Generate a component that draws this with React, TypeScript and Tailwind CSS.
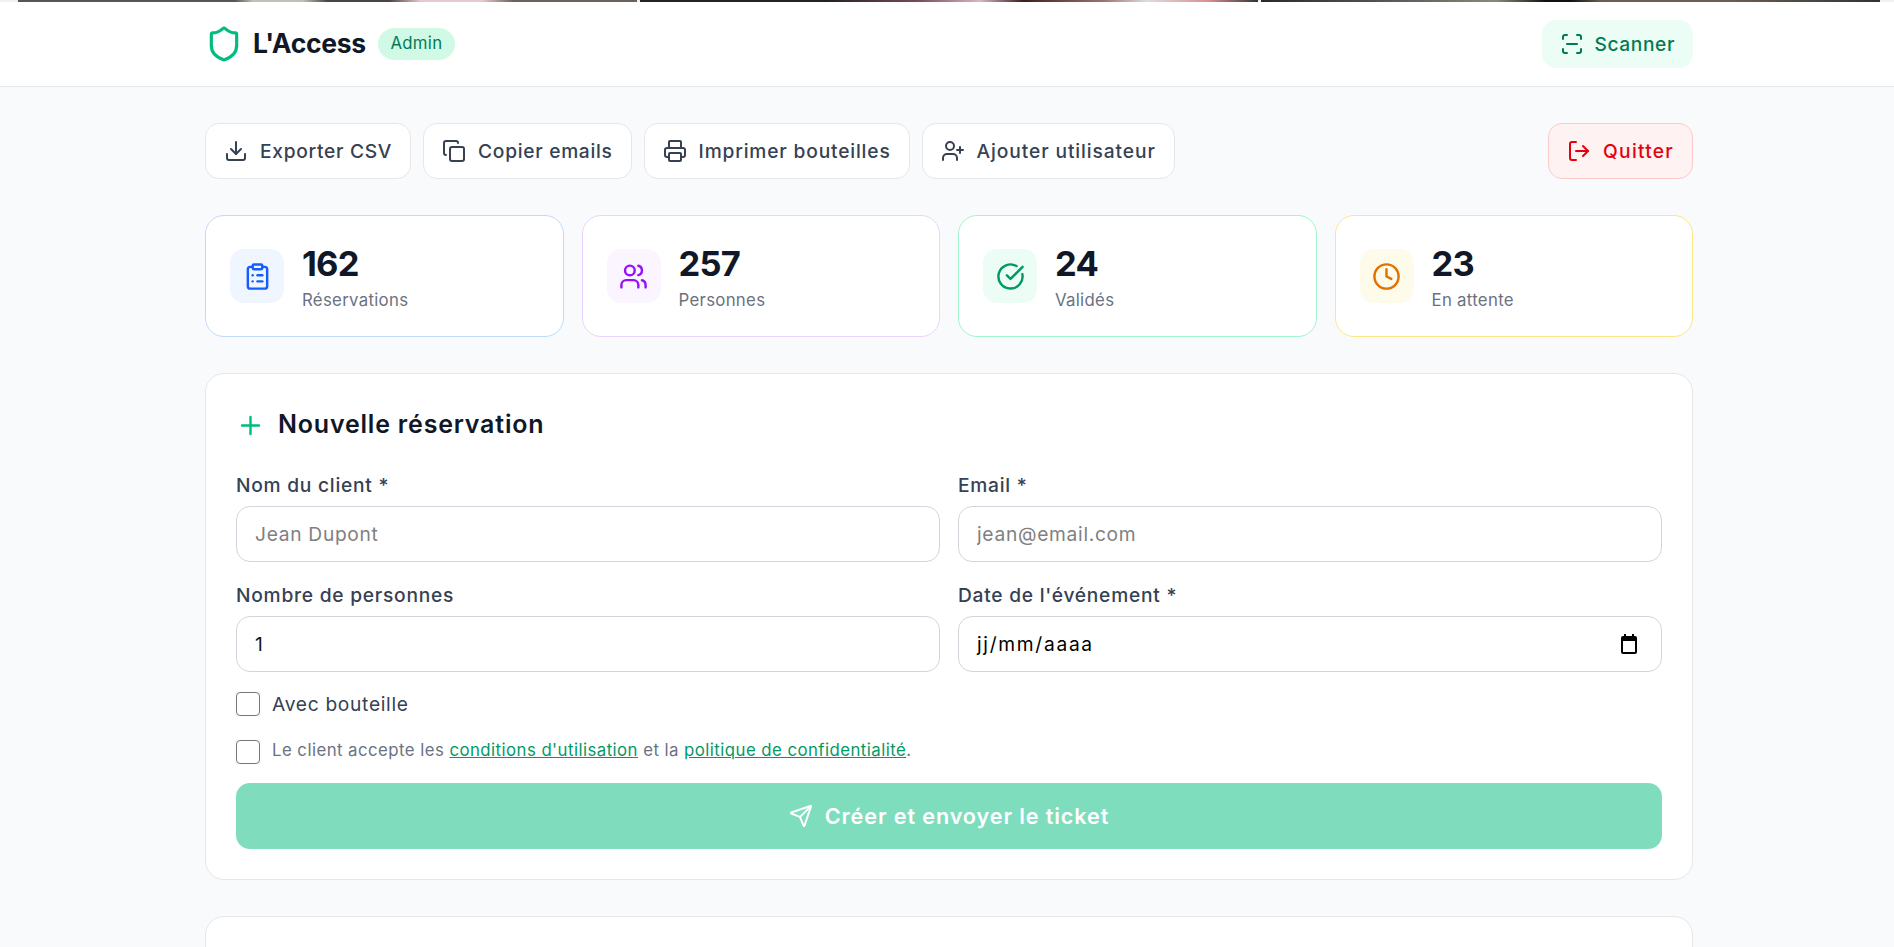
import { CircleCheckBig, ClipboardList, Clock, Copy, Download, LogOut, Plus, Printer, ScanLine, Send, Shield, UserPlus, Users } from "lucide-react";

const actions = [
  { label: "Exporter CSV", icon: Download, tracking: "tracking-[0.7px]" },
  { label: "Copier emails", icon: Copy, tracking: "tracking-[0.7px]" },
  { label: "Imprimer bouteilles", icon: Printer, tracking: "tracking-[0.83px]" },
  { label: "Ajouter utilisateur", icon: UserPlus, tracking: "tracking-[0.9px]" },
];

const stats = [
  { value: "162", label: "Réservations", icon: ClipboardList, border: "border-blue-200", box: "bg-blue-50", color: "text-blue-600" },
  { value: "257", label: "Personnes", icon: Users, border: "border-purple-200", box: "bg-purple-50", color: "text-purple-600" },
  { value: "24", label: "Validés", icon: CircleCheckBig, border: "border-emerald-200", box: "bg-emerald-50", color: "text-emerald-600" },
  { value: "23", label: "En attente", icon: Clock, border: "border-amber-200", box: "bg-amber-50", color: "text-amber-600" },
];

const Field = ({ label, children }: { label: string; children: React.ReactNode }) => (
  <div>
    <label className="mb-[6px] block text-[19.2px] leading-[29px] font-[450] tracking-[0.75px] text-gray-700">{label}</label>
    {children}
  </div>
);

const inputClass =
  "h-[56px] w-full rounded-[14px] border border-gray-300 bg-white px-[18px] text-[19.2px] tracking-[0.7px] text-gray-900 placeholder:text-[#808080]";

const checkClass = "m-0 h-[24px] w-[24px] shrink-0 appearance-none rounded-[4px] border-[1.5px] border-[#767676] bg-white";

const App = () => {
  return (
    <div className="h-[947px] overflow-hidden bg-gray-50 font-['Inter','Liberation_Sans',sans-serif]">
      <div className="flex h-[2px] gap-[3px] bg-[#f4f0ec] pr-[14px] pl-[18px]">
        <div className="flex-1 bg-[linear-gradient(90deg,#5a5550,#5a5550_35%,#c0c0b8_38%,#c0c0b8_46%,#4a4540_50%,#4a4540_60%,#e8c8cc_65%,#e8c8cc_75%,#6a625c_80%,#6a625c)]" />
        <div className="flex-1 bg-[linear-gradient(90deg,#222,#222_30%,#7a4a55_45%,#d8b8c0_55%,#3a1f1f_62%,#a07070_75%,#ddd_82%,#d89090_92%,#333)]" />
        <div className="flex-1 bg-[linear-gradient(90deg,#2a2a2a,#555_20%,#8a8a7a_38%,#111_46%,#111_50%,#6a5f55_55%,#6a5f55_75%,#333)]" />
      </div>

      <header className="h-[85px] border-b border-gray-200 bg-white pl-1">
        <div className="mx-auto flex h-full w-[1488px] items-center justify-between">
          <div className="flex items-center">
            <Shield className="h-[38px] w-[38px] text-emerald-500" />
            <span className="ml-[10px] text-[26.5px] font-bold tracking-[-0.3px] text-gray-900">L'Access</span>
            <span className="ml-[12px] rounded-full bg-emerald-100 px-[12.5px] py-[3px] text-[16.8px] font-normal tracking-[0.3px] text-emerald-700">Admin</span>
          </div>
          <button className="flex h-[48px] items-center gap-[10px] rounded-[14px] bg-emerald-50 px-[18px] text-[19.2px] font-[450] tracking-[0.6px] text-emerald-700">
            <ScanLine className="h-6 w-6" />
            Scanner
          </button>
        </div>
      </header>

      <main className="pt-[36px] pl-1">
        <div className="mx-auto flex w-[1488px] flex-col gap-9">
          <div className="flex items-center justify-between">
            <div className="flex gap-[12px]">
              {actions.map((a) => (
                <button key={a.label} className={`flex h-[56px] items-center gap-[12px] rounded-[14px] border border-gray-200 bg-white px-[18px] text-[19.2px] font-[450] text-gray-700 ${a.tracking}`}>
                  <a.icon className="h-6 w-6" />
                  {a.label}
                </button>
              ))}
            </div>
            <button className="flex h-[56px] items-center gap-[12px] rounded-[14px] border border-red-200 bg-red-50 px-[18px] text-[19.2px] font-[450] tracking-[1.25px] text-red-600">
              <LogOut className="h-6 w-6" />
              Quitter
            </button>
          </div>

          <div className="grid grid-cols-4 gap-[18px]">
            {stats.map((s) => (
              <div key={s.label} className={`flex h-[122px] items-center gap-[18px] rounded-[19px] border bg-white px-[24px] ${s.border}`}>
                <div className={`flex h-[54px] w-[54px] items-center justify-center rounded-[14px] ${s.box}`}>
                  <s.icon className={`h-[29px] w-[29px] ${s.color}`} />
                </div>
                <div className="pt-[2px]">
                  <div className="text-[34.5px] leading-[43px] font-bold tracking-[-0.8px] text-gray-900">{s.value}</div>
                  <div className="mt-[3px] text-[16.8px] leading-[24px] tracking-[0.3px] text-gray-500">{s.label}</div>
                </div>
              </div>
            ))}
          </div>

          <section className="rounded-[19px] border border-gray-200 bg-white px-[30px] pt-[34px] pb-[30px]">
            <h2 className="mb-[29px] flex h-[34px] items-center gap-[13px] text-[25px] font-semibold tracking-[0.8px] text-gray-900">
              <Plus className="h-[29px] w-[29px] text-emerald-500" />
              Nouvelle réservation
            </h2>
            <div className="grid grid-cols-2 gap-x-[18px] gap-y-[19px]">
              <Field label="Nom du client *">
                <input className={inputClass} placeholder="Jean Dupont" />
              </Field>
              <Field label="Email *">
                <input className={inputClass} placeholder="jean@email.com" />
              </Field>
              <Field label="Nombre de personnes">
                <input className={inputClass} defaultValue="1" />
              </Field>
              <Field label="Date de l'événement *">
                <div className="flex h-[56px] w-full items-center justify-between rounded-[14px] border border-gray-300 bg-white pr-[24px] pl-[18px] text-[19.2px] tracking-[1.7px] text-black">
                  <span>jj/mm/aaaa</span>
                  <svg viewBox="0 0 16 20" className="h-[20px] w-[16px]" fill="currentColor">
                    <path fillRule="evenodd" d="M3 0h2v2h6V0h2v2h1a2 2 0 0 1 2 2v14a2 2 0 0 1-2 2H2a2 2 0 0 1-2-2V4a2 2 0 0 1 2-2h1V0zM2 7v11h12V7H2z" />
                  </svg>
                </div>
              </Field>
            </div>
            <label className="mt-[18px] flex items-center gap-[12px] text-[19.2px] tracking-[0.7px] text-gray-700">
              <input type="checkbox" className={checkClass} />
              Avec bouteille
            </label>
            <label className="mt-[19px] flex items-start gap-[12px] text-[16.8px] leading-[24px] tracking-[0.45px] text-gray-500">
              <input type="checkbox" className={`mt-[2px] ${checkClass}`} />
              <span>
                Le client accepte les <a className="text-emerald-600 underline">conditions d'utilisation</a> et la <a className="text-emerald-600 underline">politique de confidentialité</a>.
              </span>
            </label>
            <button className="mt-[19px] flex h-[66px] w-full items-center justify-center gap-[12px] rounded-[14px] bg-emerald-500 text-[21.6px] font-semibold tracking-[0.9px] text-white opacity-50">
              <Send className="h-6 w-6" />
              Créer et envoyer le ticket
            </button>
          </section>

          <section className="h-[200px] rounded-[19px] border border-gray-200 bg-white" />
        </div>
      </main>
    </div>
  );
};

export default App;
